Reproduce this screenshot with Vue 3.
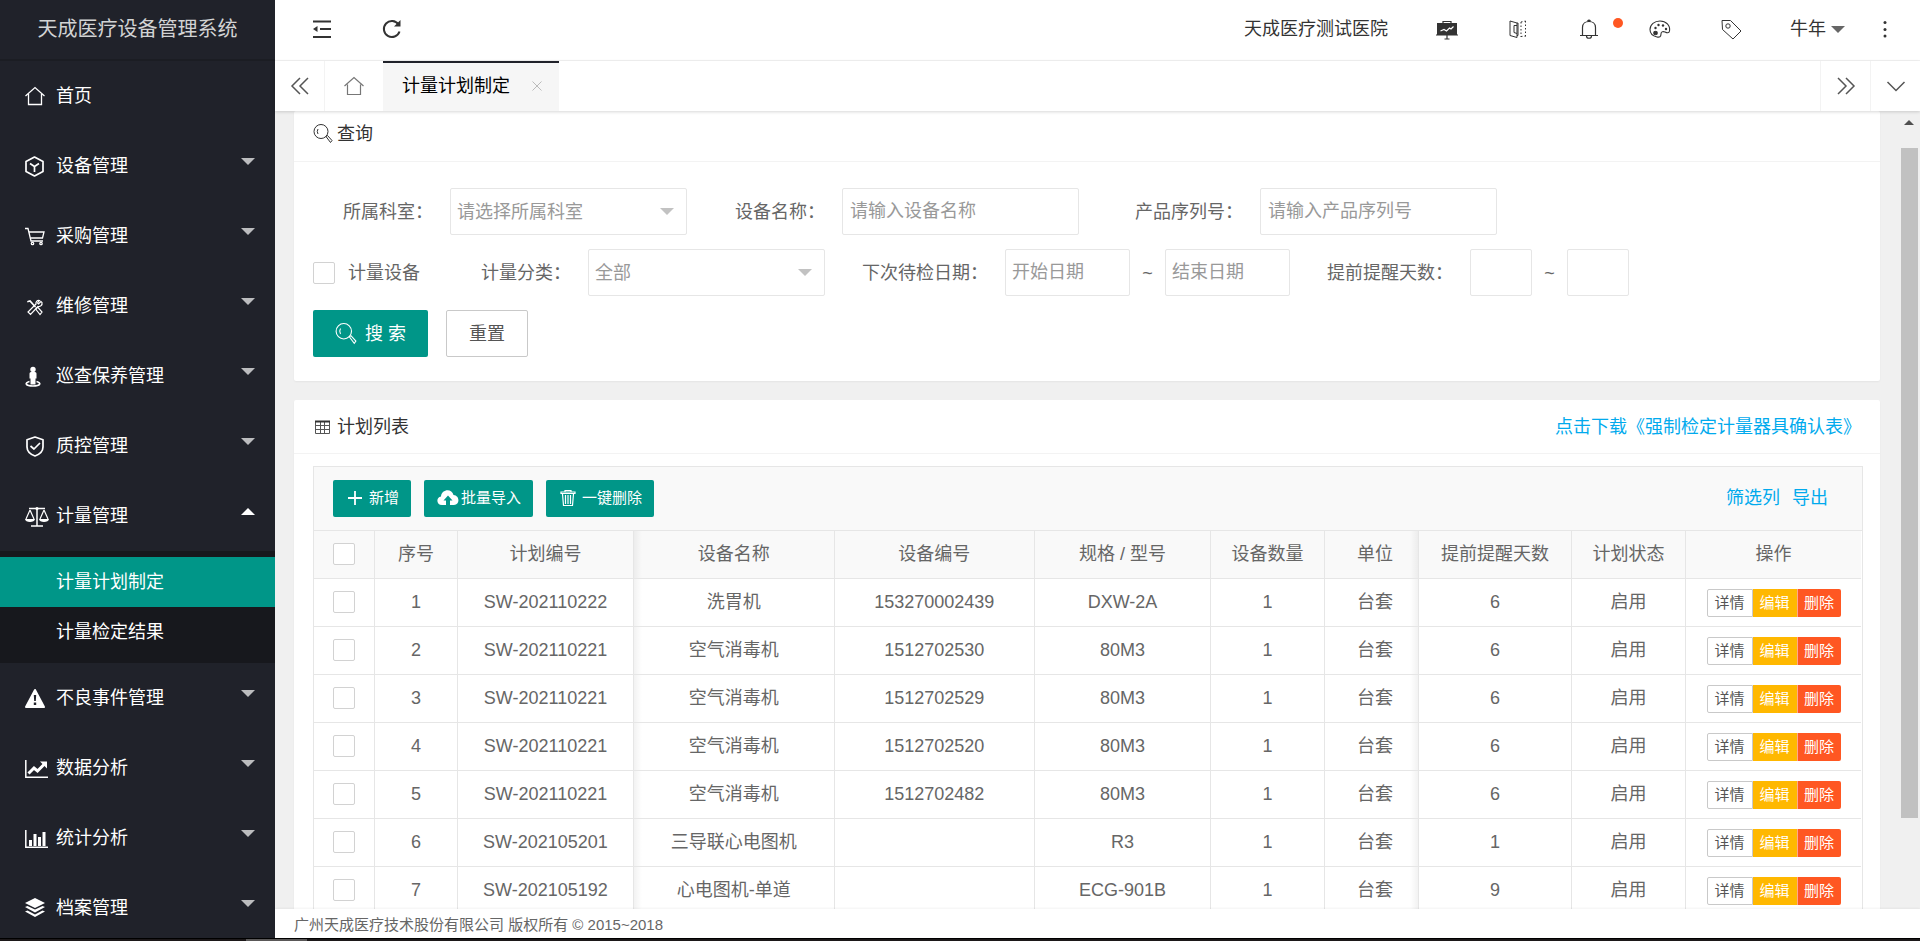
<script setup>
import { ref } from 'vue'

const menus = [
  { name: '首页', icon: 'home', leaf: true },
  { name: '设备管理', icon: 'cube' },
  { name: '采购管理', icon: 'cart' },
  { name: '维修管理', icon: 'tools' },
  { name: '巡查保养管理', icon: 'person' },
  { name: '质控管理', icon: 'shield' },
  { name: '计量管理', icon: 'scale', open: true, children: ['计量计划制定', '计量检定结果'] },
  { name: '不良事件管理', icon: 'warn' },
  { name: '数据分析', icon: 'line' },
  { name: '统计分析', icon: 'bars' },
  { name: '档案管理', icon: 'layers' }
]
const activeChild = ref('计量计划制定')

const rows = [
  { code: 'SW-202110222', name: '洗胃机', no: '153270002439', model: 'DXW-2A', days: 6 },
  { code: 'SW-202110221', name: '空气消毒机', no: '1512702530', model: '80M3', days: 6 },
  { code: 'SW-202110221', name: '空气消毒机', no: '1512702529', model: '80M3', days: 6 },
  { code: 'SW-202110221', name: '空气消毒机', no: '1512702520', model: '80M3', days: 6 },
  { code: 'SW-202110221', name: '空气消毒机', no: '1512702482', model: '80M3', days: 6 },
  { code: 'SW-202105201', name: '三导联心电图机', no: '', model: 'R3', days: 1 },
  { code: 'SW-202105192', name: '心电图机-单道', no: '', model: 'ECG-901B', days: 9 }
]
</script>

<template>
  <div class="shell">
    <div class="app">
      <aside class="side">
        <h1 class="logo">天成医疗设备管理系统</h1>
        <nav>
          <div v-for="m in menus" :key="m.name">
            <a class="item" href="#">
              <svg class="mi" viewBox="0 0 24 24" aria-hidden="true">
                <g v-if="m.icon === 'home'" fill="none" stroke="#fff" stroke-width="1.3">
                  <path d="M0.5 12 L10 3.5 L19.500 12" /><path d="M3.500 10V20.500H16.500V10" />
                </g>
                <g v-else-if="m.icon === 'cube'" fill="none" stroke="#fff" stroke-width="1.700" stroke-linejoin="round">
                  <path d="M9.500 3 L18 7.500V17.500L9.500 22L1 17.500V7.500Z" /><path d="M5 9.500L9.500 12.500L14 9.500M9.500 12.500V18" />
                </g>
                <g v-else-if="m.icon === 'cart'" fill="none" stroke="#fff" stroke-width="1.300">
                  <path d="M0 4.500H3L6 17H18" /><path d="M4 8H19L17.500 14H5.500" />
                  <circle cx="7.500" cy="19.500" r="1.200" /><circle cx="16" cy="19.500" r="1.200" />
                </g>
                <g v-else-if="m.icon === 'tools'" fill="none" stroke="#fff" stroke-width="1.200" stroke-linecap="round">
                  <path d="M3 7.500L5 7L10 12.500" stroke-width="1.800" /><path d="M11.500 14L13 13.500L17 18L15 20.500L11 15.500Z" />
                  <path d="M16 7.500L13.500 10L12.500 9L14.500 6.500C12 6 10.500 8 11 10L3 18L5.500 20.500L13 12.500C15.500 13 17.500 11 17 8.500Z" />
                </g>
                <g v-else-if="m.icon === 'person'" fill="#fff">
                  <circle cx="8" cy="5.500" r="2.700" /><path d="M4.500 9.500Q4.500 8 6 8H10Q11.500 8 11.500 9.500V14.500H10.500V20.500H5.500V14.500H4.500Z" />
                  <path d="M4.500 17.500C-1 19 0.500 22 8 22C15.500 22 17 19 11.500 17.500" fill="none" stroke="#fff" stroke-width="1.600" />
                </g>
                <g v-else-if="m.icon === 'shield'" fill="none" stroke="#fff" stroke-width="1.700" stroke-linejoin="round">
                  <path d="M10 3L18 5.800V13C18 17.500 14 20.500 10 22C6 20.500 2 17.500 2 13V5.800Z" /><path d="M5.500 12L9 15L15 9" />
                </g>
                <g v-else-if="m.icon === 'scale'" fill="none" stroke="#fff" stroke-width="1.500">
                  <path d="M4 4.500H20M12 4.500V22M6 22H18" /><circle cx="12" cy="4.500" r="1.600" fill="#fff" stroke="none" />
                  <path d="M5 6L1 15M5 6L9 15M19 6L15 15M19 6L23 15" stroke-width="1.200" />
                  <path d="M0 15H10C10 19 0 19 0 15ZM14 15H24C24 19 14 19 14 15Z" fill="#fff" stroke="none" />
                </g>
                <g v-else-if="m.icon === 'warn'">
                  <path d="M10 4L19 21H1Z" fill="#fff" stroke="#fff" stroke-width="2" stroke-linejoin="round" />
                  <path d="M8.800 9H11.200L10.800 15H9.200ZM8.800 16.500H11.200V19H8.800Z" fill="#20222a" />
                </g>
                <g v-else-if="m.icon === 'line'" fill="none" stroke="#fff">
                  <path d="M0.800 4V21.300H23" stroke-width="1.500" /><path d="M3.500 17.500L9 12L12.500 15L19 8.500" stroke-width="3" />
                  <path d="M15 5.500H22V12.500Z" fill="#fff" stroke="none" />
                </g>
                <g v-else-if="m.icon === 'bars'">
                  <path d="M0.800 4V21.300H23" fill="none" stroke="#fff" stroke-width="1.500" />
                  <path d="M4 14H7V20H4ZM8.500 8H11.500V20H8.500ZM13 11H16V20H13ZM17.500 6H20.500V20H17.500Z" fill="#fff" />
                </g>
                <g v-else fill="#fff">
                  <path d="M10 2L20 7L10 12L0 7Z" />
                  <path d="M0 11L2.500 10L10 13.500L17.500 10L20 11L10 16.500Z" /><path d="M0 15.500L2.500 14.500L10 18.500L17.500 14.500L20 15.500L10 21Z" />
                </g>
              </svg>
              <span class="mt">{{ m.name }}</span>
              <i v-if="!m.leaf" class="caret" :class="{ up: m.open }"></i>
            </a>
            <div v-if="m.children" class="sub">
              <a
                v-for="c in m.children"
                :key="c"
                href="#"
                :class="{ on: c === activeChild }"
                @click.prevent="activeChild = c"
              >{{ c }}</a>
            </div>
          </div>
        </nav>
      </aside>

      <div class="right">
        <header class="top">
          <div class="top-left">
            <button type="button" aria-label="收起菜单">
              <svg width="24" height="24" viewBox="0 0 24 24" fill="none" stroke="#333" stroke-width="2">
                <path d="M3 4.500H21M10 12H21M3 20H21" /><path d="M3 12L7.500 9V15Z" fill="#333" stroke="none" />
              </svg>
            </button>
            <button type="button" aria-label="刷新">
              <svg width="24" height="24" viewBox="0 0 24 24" fill="none" stroke="#333" stroke-width="2">
                <path d="M18.500 7.500A8 8 0 1 0 19.500 14.500" /><path d="M20.500 3V9.500H14" fill="#333" stroke="none" />
              </svg>
            </button>
          </div>
          <div class="top-right">
            <span>天成医疗测试医院</span>
            <button type="button" aria-label="数据大屏">
              <svg width="24" height="24" viewBox="0 0 24 24">
                <path d="M2 6H22V17.500H23V18.500H1V17.500H2Z" fill="#333" />
                <path d="M8 6V4.500H16V6M12 18V22M9.500 22H14.500" fill="none" stroke="#333" stroke-width="1.200" />
                <path d="M5.500 14L9 12.500L11.500 14L14.500 11L16 12L18.500 9.500" fill="none" stroke="#fff" stroke-width="1.200" />
              </svg>
            </button>
            <button type="button" aria-label="手册">
              <svg width="24" height="24" viewBox="0 0 24 24" fill="none" stroke="#333" stroke-width="1">
                <path d="M4 4L11 6V20.500L4 18.500Z" /><path d="M11 8.500H8V15.500L11 16.500M11 6H12V18.500H11" />
                <path d="M15 5V20M19.500 4V20M15 5L19.500 4M15 19.500L19.500 19" stroke-dasharray="1.500 2" />
              </svg>
            </button>
            <button type="button" class="bell" aria-label="消息">
              <svg width="24" height="24" viewBox="0 0 24 24" fill="none" stroke="#333" stroke-width="1.200">
                <path d="M5.500 18V10.500C5.500 2.500 18.500 2.500 18.500 10.500V18M3 18.500H21M10.500 4Q12 2.500 13.500 4M9.500 19C9.500 22 14.500 22 14.500 19" />
              </svg>
              <i class="dot"></i>
            </button>
            <button type="button" aria-label="主题">
              <svg width="24" height="24" viewBox="0 0 24 24" fill="none" stroke="#333" stroke-width="1.100">
                <path d="M12 4C18 4 22.500 8.500 21.500 14C21 16.500 19 16 17 15C14.500 14 13 15 13 17C13 20 11.500 20.500 9 20C5 19 2 16 2 12.500C2 7.500 6.500 4 12 4Z" />
                <circle cx="7.500" cy="16" r="1.800" fill="#333" /><g fill="#333" stroke="none"><circle cx="7.500" cy="11" r="1.200" /><circle cx="10.500" cy="8" r="1.200" /><circle cx="15" cy="8.500" r="1.200" /><circle cx="18" cy="12" r="1.200" /></g>
              </svg>
            </button>
            <button type="button" aria-label="便签">
              <svg width="24" height="24" viewBox="0 0 24 24" fill="none" stroke="#333" stroke-width="1" stroke-linejoin="round">
                <path d="M3 3.500H11.500L22 14L14 22L3.500 12.500Z" /><circle cx="9" cy="9" r="2.200" />
              </svg>
            </button>
            <div class="user">
              <button type="button" class="name">牛年<i></i></button>
              <button type="button" aria-label="更多">
                <svg width="24" height="24" viewBox="0 0 24 24" fill="#333"><circle cx="12" cy="5.500" r="1.500" /><circle cx="12" cy="12.500" r="1.500" /><circle cx="12" cy="19" r="1.500" /></svg>
              </button>
            </div>
          </div>
        </header>

        <div class="tabs">
          <button type="button" class="edge first" aria-label="向左">
            <svg width="20" height="20" viewBox="0 0 20 20"><path d="M10 2L2 10L10 18M18 2L10 10L18 18" /></svg>
          </button>
          <a class="tab-home" href="#" aria-label="首页">
            <svg width="20" height="20" viewBox="0 0 20 20"><path d="M0.500 10L10 1.500L19.500 10M3.500 8.500V18.500H16.500V8.500" /></svg>
          </a>
          <div class="tab">
            <span>计量计划制定</span>
            <button type="button" aria-label="关闭"><svg width="10" height="10" viewBox="0 0 10 10"><path d="M0.500 0.500L9.500 9.500M9.500 0.500L0.500 9.500" /></svg></button>
          </div>
          <span class="fill"></span>
          <button type="button" class="edge" aria-label="向右">
            <svg width="20" height="20" viewBox="0 0 20 20"><path d="M2 2L10 10L2 18M10 2L18 10L10 18" /></svg>
          </button>
          <button type="button" class="edge" aria-label="标签操作">
            <svg width="20" height="20" viewBox="0 0 20 20"><path d="M1.500 6L10 14.500L18.500 6" /></svg>
          </button>
        </div>

        <div class="body">
          <main class="content">
            <section class="card">
              <div class="card-head first">
                <svg class="mag" width="20" height="20" viewBox="0 0 20 20"><circle cx="8" cy="7.500" r="7" /><path d="M5 5Q3.500 7.500 5 10M13 12.500L14.500 11.500L19 16.500L17.500 18.500Z" /></svg>
                <h2>查询</h2>
              </div>
              <form class="form" @submit.prevent>
                <div class="line">
                  <div class="field f1"><label for="dept">所属科室：</label>
                    <span class="sel"><select id="dept"><option>请选择所属科室</option></select></span></div>
                  <div class="field f2"><label for="dname">设备名称：</label><input id="dname" type="text" placeholder="请输入设备名称" /></div>
                  <div class="field f3"><label for="serial">产品序列号：</label><input id="serial" type="text" placeholder="请输入产品序列号" /></div>
                </div>
                <div class="line">
                  <label class="check"><input type="checkbox" />计量设备</label>
                  <div class="field f4"><label for="kind">计量分类：</label>
                    <span class="sel"><select id="kind"><option>全部</option></select></span></div>
                  <div class="field f5"><label for="d1">下次待检日期：</label><input id="d1" class="date" type="text" placeholder="开始日期" />
                    <span class="tilde">~</span><input class="date" type="text" placeholder="结束日期" aria-label="结束日期" /></div>
                  <div class="field f5"><label for="n1">提前提醒天数：</label><input id="n1" class="num" type="text" />
                    <span class="tilde">~</span><input class="num" type="text" aria-label="最多天数" /></div>
                </div>
                <div class="line">
                  <button type="submit" class="btn search">
                    <svg class="mag" width="22" height="22" viewBox="0 0 20 20"><circle cx="8" cy="7.500" r="7" /><path d="M5 5Q3.500 7.500 5 10M13 12.500L14.500 11.500L19 16.500L17.500 18.500Z" /></svg>
                    搜 索
                  </button>
                  <button type="reset" class="btn reset">重置</button>
                </div>
              </form>
            </section>

            <section class="card">
              <div class="card-head">
                <svg width="20" height="20" viewBox="0 0 20 20" fill="none" stroke="#555"><path d="M2.500 4.500H16.500V16.500H2.500ZM2.500 8.500H16.500M2.500 12.500H16.500M7.500 4.500V16.500M11.500 4.500V16.500" /><path d="M2 4.500H17" stroke="#333" stroke-width="2" /></svg>
                <h2>计划列表</h2>
                <a href="#" class="dl">点击下载《强制检定计量器具确认表》</a>
              </div>
              <div class="wrap">
                <div class="view">
                  <div class="tools">
                    <button type="button" class="tb"><svg width="18" height="18" viewBox="0 0 18 18"><path d="M9 2V16M2 9H16" fill="none" stroke="#fff" stroke-width="1.800" /></svg>新增</button>
                    <button type="button" class="tb wide"><svg width="22" height="18" viewBox="0 0 22 18"><path d="M5 16C-1 16 -1 8 4 7.500C4.500 0 15 -1 16.500 6C23 6.500 23 16 17 16H13V11.500H15.500L11 6.500L6.500 11.500H9V16Z" fill="#fff" /></svg>批量导入</button>
                    <button type="button" class="tb"><svg width="18" height="18" viewBox="0 0 18 18" fill="none" stroke="#fff" stroke-width="1.200"><path d="M2 4.500V3H16V4.500ZM6 3V1.500H12V3M3.500 5L4.500 16.500H13.500L14.500 5M6.500 6V15M9 6V15M11.500 6V15" /></svg>一键删除</button>
                    <span class="links"><a href="#">筛选列</a><a href="#">导出</a></span>
                  </div>
                  <div class="grid">
                    <table>
                      <colgroup>
                        <col class="c61" /><col class="c83" /><col class="c176" /><col /><col /><col class="c176" />
                        <col class="c114" /><col class="c94" /><col class="c153" /><col class="c114" /><col class="c175" />
                      </colgroup>
                      <thead>
                        <tr>
                          <th class="ck"><input type="checkbox" aria-label="全选" /></th>
                          <th>序号</th><th>计划编号</th><th class="shl">设备名称</th><th>设备编号</th><th>规格 / 型号</th>
                          <th>设备数量</th><th class="shr">单位</th><th>提前提醒天数</th><th>计划状态</th><th>操作</th>
                        </tr>
                      </thead>
                      <tbody>
                        <tr v-for="(r, i) in rows" :key="i">
                          <td class="ck"><input type="checkbox" :aria-label="'选择第' + (i + 1) + '行'" /></td>
                          <td>{{ i + 1 }}</td><td>{{ r.code }}</td><td class="shl">{{ r.name }}</td><td>{{ r.no }}</td><td>{{ r.model }}</td>
                          <td>1</td><td class="shr">台套</td><td>{{ r.days }}</td><td>启用</td>
                          <td class="act"><div class="ops"><button type="button" class="see">详情</button><button type="button" class="edit">编辑</button><button type="button" class="del">删除</button></div></td>
                        </tr>
                      </tbody>
                    </table>
                  </div>
                </div>
              </div>
            </section>
          </main>
          <div class="bar" aria-hidden="true"><i class="arrow"></i><i class="thumb"></i></div>
        </div>

        <footer class="foot">广州天成医疗技术股份有限公司 版权所有 © 2015~2018</footer>
      </div>
    </div>
    <div class="strip"><i></i></div>
  </div>
</template>

<style>
html, body { background: #fff; }
</style>

<style scoped>
* { box-sizing: border-box; }
.shell {
  height: 100vh; display: flex; flex-direction: column; overflow: hidden;
  font: 400 18px/24px "Liberation Sans", "Noto Sans CJK SC", sans-serif; color: #666;
}
a { color: inherit; text-decoration: none; }
button, input, select { font: inherit; color: inherit; margin: 0; }
button { border: 0; background: none; padding: 0; cursor: pointer; display: flex; align-items: center; justify-content: center; white-space: nowrap; }
svg { display: block; flex: none; }
h1, h2 { margin: 0; font: inherit; }
.app { flex: 1; min-height: 0; display: flex; }
.strip { height: 3px; flex: none; background: #1c1819; border-top: 1px solid #000; }
.strip i { display: block; margin-left: 246px; width: 61px; height: 2px; background: #5a5858; }

.side { width: 275px; flex: none; background: #20222a; color: #fff; overflow: hidden; }
.logo { height: 61px; line-height: 58px; font-size: 20px; text-align: center; color: #d2d3d4; border-bottom: 2px solid #1b1d23; }
.item { height: 70px; display: flex; align-items: center; padding: 0 20px 0 25px; }
.mi { width: 24px; height: 24px; margin-right: 7px; overflow: visible; }
.mt { flex: 1; }
.caret { border: 7px solid transparent; border-top: 7px solid #bcbdbf; border-bottom: 0; margin-bottom: 9px; }
.caret.up { border-top: 0; border-bottom: 7px solid #fff; }
.sub { background: #17181d; padding: 6px 0; }
.sub a { display: block; height: 50px; line-height: 50px; padding-left: 56px; }
.sub a.on { background: #009688; }

.right { flex: 1; min-width: 0; display: flex; flex-direction: column; }
.top { height: 61px; flex: none; display: flex; justify-content: space-between; border-bottom: 1px solid #f3f3f3; color: #333; padding: 0 23px 2px 35px; }
.top-left { display: flex; align-items: center; gap: 46px; }
.top-right { display: flex; align-items: center; gap: 47px; }
.bell { position: relative; }
.dot { position: absolute; left: 36px; top: 1px; width: 10px; height: 10px; border-radius: 50%; background: #ff5722; }
.user { display: flex; align-items: center; gap: 28px; }
.name i { border: 7px solid transparent; border-top: 7px solid #666; border-bottom: 0; margin-left: 5px; }

.tabs { height: 50px; flex: none; display: flex; position: relative; z-index: 2; box-shadow: 0 1px 3px rgba(0, 0, 0, .16); background: #fff; }
.tabs svg { fill: none; stroke: #555; stroke-width: 1.5; }
.edge { width: 50px; border-left: 1px solid #f3f3f3; }
.edge.first { border-left: 0; border-right: 1px solid #f3f3f3; }
.tab-home { width: 58px; display: flex; align-items: center; justify-content: center; }
.tabs .tab-home svg { stroke: #777; stroke-width: 1.2; }
.tab { display: flex; align-items: center; gap: 22px; padding: 0 17px 2px 19px; background: #f6f6f6; border-top: 2px solid #20222a; color: #000; }
.tab svg { stroke: #bbb; stroke-width: 1; }
.fill { flex: 1; }

.body { flex: 1; min-height: 0; display: flex; background: #f0f0f0; }
.content { flex: 1; min-width: 0; overflow: hidden; padding: 0 20px 0 19px; }
.bar { width: 20px; flex: none; background: #f0f0f0; display: flex; flex-direction: column; align-items: center; padding-right: 2px; }
.arrow { border: 5px solid transparent; border-bottom: 5px solid #505050; border-top: 0; margin: 9px 0 23px; }
.thumb { width: 17px; height: 84%; background: #c1c1c1; }
.card { background: #fff; border-radius: 2px; box-shadow: 0 1px 2px rgba(0, 0, 0, .05); margin-bottom: 19px; }
.card-head { height: 54px; display: flex; align-items: center; gap: 4px; padding: 0 19px; border-bottom: 1px solid #f3f3f3; color: #333; }
.card-head.first { height: 51px; padding-bottom: 5px; }
.mag { fill: none; stroke: currentColor; stroke-width: 1; }
.dl { margin-left: auto; color: #01aaed; }
.form { padding: 26px 19px 24px; display: flex; flex-direction: column; gap: 14px; }
.line { display: flex; align-items: center; white-space: nowrap; }
.field { display: flex; align-items: center; }
.field label { margin-right: 17px; }
.f1 { margin-left: 30px; }
.f2 { margin-left: 48px; }
.f3 { margin-left: 56px; }
.f4 { margin-left: 61px; }
.f5 { margin-left: 37px; }
input[type="text"], select { width: 237px; height: 47px; border: 1px solid #e6e6e6; border-radius: 2px; background: #fff; padding: 0 7px; outline: 0; }
input::placeholder { color: #999; opacity: 1; }
select { appearance: none; color: #999; display: block; padding: 0 6px; }
.sel { position: relative; }
.sel::after { content: ""; position: absolute; right: 13px; top: 20px; border: 7px solid transparent; border-top: 7px solid #c2c2c2; border-bottom: 0; pointer-events: none; }
input.date { width: 125px; padding: 0 6px; }
input.num { width: 62px; }
.tilde { width: 35px; text-align: center; }
.check { display: flex; align-items: center; gap: 13px; }
input[type="checkbox"] { appearance: none; width: 22px; height: 22px; border: 1px solid #d2d2d2; border-radius: 2px; background: #fff; flex: none; display: block; }
input[type="checkbox"]:checked { background: #009688; border-color: #009688; }
.btn { height: 47px; border-radius: 2px; }
.search { width: 115px; background: #009688; color: #fff; gap: 8px; margin-right: 18px; }
.reset { width: 82px; border: 1px solid #c9c9c9; color: #555; }

.wrap { padding: 12px 17px 19px 19px; }
.view { border: 1px solid #e6e6e6; }
.tools { height: 64px; background: #f9f9f9; border-bottom: 1px solid #e6e6e6; display: flex; align-items: center; padding: 0 34px 1px 19px; gap: 13px; }
.tb { height: 37px; background: #009688; color: #fff; border-radius: 2px; font-size: 15px; padding: 0 12px 0 13px; gap: 5px; }
.tb.wide { gap: 2px; }
.links { margin-left: auto; display: flex; gap: 12px; color: #01aaed; }
.grid { padding-right: 1px; }
table { width: 100%; table-layout: fixed; border-collapse: separate; border-spacing: 0; }
.c61 { width: 61px; }
.c83 { width: 83px; }
.c94 { width: 94px; }
.c114 { width: 114px; }
.c153 { width: 153px; }
.c175 { width: 175px; }
.c176 { width: 176px; }
th, td { height: 48px; padding: 0 0 2px; text-align: center; border-right: 1px solid #e6e6e6; border-bottom: 1px solid #e6e6e6; font-weight: inherit; white-space: nowrap; }
th:last-child, td:last-child { border-right: 0; }
th { background-color: #f9f9f9; }
td.act { padding: 0; }
.ck input { margin: 0 auto; }
.shl { background-image: linear-gradient(90deg, rgba(0, 0, 0, .05), transparent 8px); }
.shr { background-image: linear-gradient(270deg, rgba(0, 0, 0, .05), transparent 8px); padding-left: 7px; }
.ops { display: flex; justify-content: center; }
.ops button { width: 44px; height: 28px; font-size: 15px; color: #fff; }
.ops .see { width: 46px; border: 1px solid #c9c9c9; border-radius: 2px 0 0 2px; color: #555; }
.ops .edit { background: #ffb800; }
.ops .del { background: #ff5722; border-left: 1px solid #ffa78c; border-radius: 0 2px 2px 0; }

.foot { height: 29px; flex: none; background: #fff; padding-left: 19px; font-size: 15px; line-height: 31px; position: relative; box-shadow: 0 -1px 2px rgba(0, 0, 0, .05); }
</style>
